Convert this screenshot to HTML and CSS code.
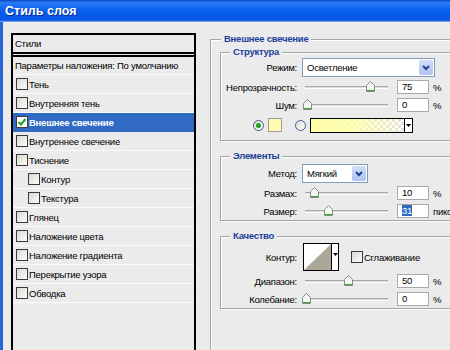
FILE: index.html
```html
<!DOCTYPE html>
<html>
<head>
	<meta charset="utf-8">
	<title>Стиль слоя</title>
	<link rel="stylesheet" href="styles.css">
</head>
<body>
	<div class="window">
		<div class="titlebar">Стиль слоя</div>
		<div class="frame">
			<div class="layer-list">
				<div class="list-head">Стили</div>
				<div class="list-row">Параметры наложения: По умолчанию</div>
				<div class="list-row"><span class="cb"></span>Тень</div>
				<div class="list-row"><span class="cb"></span>Внутренняя тень</div>
				<div class="list-row selected">
					<span class="cb"><svg width="10" height="10" viewBox="0 0 10 10"><path d="M1.5 5 L4 7.5 L8.5 2" fill="none" stroke="#21a121" stroke-width="2"/></svg></span>Внешнее свечение
				</div>
				<div class="list-row"><span class="cb"></span>Внутреннее свечение</div>
				<div class="list-row"><span class="cb"></span>Тиснение</div>
				<div class="list-row sub"><span class="cb"></span>Контур</div>
				<div class="list-row sub"><span class="cb"></span>Текстура</div>
				<div class="list-row"><span class="cb"></span>Глянец</div>
				<div class="list-row"><span class="cb"></span>Наложение цвета</div>
				<div class="list-row"><span class="cb"></span>Наложение градиента</div>
				<div class="list-row"><span class="cb"></span>Перекрытие узора</div>
				<div class="list-row"><span class="cb"></span>Обводка</div>
			</div>

			<div class="settings">
				<fieldset class="group outer">
					<legend>Внешнее свечение</legend>

					<fieldset class="group first">
						<legend>Структура</legend>
						<div class="row tall">
							<span class="label">Режим:</span>
							<div class="combo wide">
								<span class="combo-text">Осветление</span>
								<span class="combo-btn"><svg width="8" height="6" viewBox="0 0 8 6"><path d="M1 1 L4 4 L7 1" fill="none" stroke="#1f3f95" stroke-width="2"/></svg></span>
							</div>
						</div>
						<div class="row gap1">
							<span class="label">Непрозрачность:</span>
							<div class="slider">
								<div class="track"></div>
								<svg class="thumb" style="left:64px" width="9" height="11" viewBox="0 0 9 11"><path d="M0.5 4.5 L4.5 0.5 L8.5 4.5 V10.5 H0.5 Z" fill="#f6f6f2" stroke="#7d907d"/><path d="M1 9.5 H8" stroke="#3aa53a"/></svg>
							</div>
							<div class="num">75</div><span class="unit">%</span>
						</div>
						<div class="row">
							<span class="label">Шум:</span>
							<div class="slider">
								<div class="track"></div>
								<svg class="thumb" style="left:1px" width="9" height="11" viewBox="0 0 9 11"><path d="M0.5 4.5 L4.5 0.5 L8.5 4.5 V10.5 H0.5 Z" fill="#f6f6f2" stroke="#7d907d"/><path d="M1 9.5 H8" stroke="#3aa53a"/></svg>
							</div>
							<div class="num">0</div><span class="unit">%</span>
						</div>
						<div class="color-row">
							<span class="radio on"></span>
							<span class="swatch"></span>
							<span class="radio"></span>
							<span class="gradient"><span class="drop"><svg width="5" height="3" viewBox="0 0 5 3"><path d="M0 0 H5 L2.5 3 Z"/></svg></span></span>
						</div>
					</fieldset>

					<fieldset class="group">
						<legend>Элементы</legend>
						<div class="row tall pad">
							<span class="label">Метод:</span>
							<div class="combo narrow">
								<span class="combo-text">Мягкий</span>
								<span class="combo-btn"><svg width="8" height="6" viewBox="0 0 8 6"><path d="M1 1 L4 4 L7 1" fill="none" stroke="#1f3f95" stroke-width="2"/></svg></span>
							</div>
						</div>
						<div class="row gap1">
							<span class="label">Размах:</span>
							<div class="slider">
								<div class="track"></div>
								<svg class="thumb" style="left:8px" width="9" height="11" viewBox="0 0 9 11"><path d="M0.5 4.5 L4.5 0.5 L8.5 4.5 V10.5 H0.5 Z" fill="#f6f6f2" stroke="#7d907d"/><path d="M1 9.5 H8" stroke="#3aa53a"/></svg>
							</div>
							<div class="num">10</div><span class="unit">%</span>
						</div>
						<div class="row">
							<span class="label">Размер:</span>
							<div class="slider">
								<div class="track"></div>
								<svg class="thumb" style="left:22px" width="9" height="11" viewBox="0 0 9 11"><path d="M0.5 4.5 L4.5 0.5 L8.5 4.5 V10.5 H0.5 Z" fill="#f6f6f2" stroke="#7d907d"/><path d="M1 9.5 H8" stroke="#3aa53a"/></svg>
							</div>
							<div class="num"><span class="sel">31</span></div><span class="unit">пикс</span>
						</div>
					</fieldset>

					<fieldset class="group">
						<legend>Качество</legend>
						<div class="row contour-row">
							<span class="label">Контур:</span>
							<span class="contour">
								<svg class="curve" width="27" height="26" viewBox="0 0 27 26"><path d="M0 26 L27 0 V26 Z" fill="#aca899"/></svg>
								<span class="drop"><svg width="5" height="3" viewBox="0 0 5 3"><path d="M0 0 H5 L2.5 3 Z"/></svg></span>
							</span>
							<span class="cb"></span><span>Сглаживание</span>
						</div>
						<div class="row">
							<span class="label">Диапазон:</span>
							<div class="slider">
								<div class="track"></div>
								<svg class="thumb" style="left:42px" width="9" height="11" viewBox="0 0 9 11"><path d="M0.5 4.5 L4.5 0.5 L8.5 4.5 V10.5 H0.5 Z" fill="#f6f6f2" stroke="#7d907d"/><path d="M1 9.5 H8" stroke="#3aa53a"/></svg>
							</div>
							<div class="num">50</div><span class="unit">%</span>
						</div>
						<div class="row">
							<span class="label">Колебание:</span>
							<div class="slider">
								<div class="track"></div>
								<svg class="thumb" style="left:0px" width="9" height="11" viewBox="0 0 9 11"><path d="M0.5 4.5 L4.5 0.5 L8.5 4.5 V10.5 H0.5 Z" fill="#f6f6f2" stroke="#7d907d"/><path d="M1 9.5 H8" stroke="#3aa53a"/></svg>
							</div>
							<div class="num">0</div><span class="unit">%</span>
						</div>
					</fieldset>
				</fieldset>
			</div>
		</div>
	</div>
</body>
</html>
```

FILE: styles.css
```css
*{
	margin:0;
	padding:0;
	box-sizing:border-box;
}

body{
	width:450px;
	height:350px;
	overflow:hidden;
	background:#ebebeb;
	font-family:"Liberation Sans", Arial, sans-serif;
	font-size:9.5px;
	letter-spacing:-0.25px;
	color:#000;
}

.window{
	display:flex;
	flex-direction:column;
	height:350px;
	overflow:hidden;
}

.titlebar{
	flex:none;
	height:22px;
	line-height:22px;
	padding-left:5px;
	color:#fff;
	font-size:12.5px;
	font-weight:bold;
	letter-spacing:0;
	text-shadow:1px 1px 0 #0a2f9c;
	background:linear-gradient(#0843c4 0%, #2a7cf4 12%, #0a60ee 45%, #0656e6 85%, #1a64e8 95%, #b9c9ea 100%);
}

.frame{
	flex:1;
	min-height:0;
	display:flex;
	align-items:flex-start;
	overflow:hidden;
	border-left:3px solid #2a63d6;
	padding:11px 0 0 8px;
}

/* left list */

.layer-list{
	flex:none;
	width:185px;
	height:360px;
	border:2px solid #000;
}

.list-head{
	height:22px;
	padding:3px 0 0 2px;
	border-bottom:5px double #000;
}

.list-row{
	display:flex;
	align-items:center;
	height:19px;
	padding-left:3px;
	border-bottom:1px solid #fbfbfb;
	white-space:nowrap;
}

.list-row:nth-child(2){
	height:18px;
	padding-left:2px;
}

.list-row.sub{
	padding-left:15px;
}

.list-row.selected{
	background:#316ac5;
	color:#fff;
	font-weight:bold;
	border-bottom-color:#316ac5;
}

.cb{
	flex:none;
	display:flex;
	align-items:center;
	justify-content:center;
	width:12px;
	height:12px;
	margin-right:1px;
	border:1px solid #3a3a3a;
	background:linear-gradient(135deg, #d8d8d2, #fdfdfd);
}

.selected .cb{
	background:#fff;
}

/* right panel */

.settings{
	flex:none;
	width:290px;
	margin-left:14px;
}

.group{
	border:1px solid #a4a4a4;
	box-shadow:inset 1px 1px 0 #fff, 1px 1px 0 #fff;
	margin-top:9px;
	padding:0;
}

.group legend{
	margin-left:9px;
	padding:0 3px;
	line-height:12px;
	font-weight:bold;
	color:#1b3f9a;
	background:#ebebeb;
}

.group.outer{
	margin-top:0;
	height:340px;
	padding-left:9px;
}

.group.outer > legend{
	margin-left:1px;
}

.group.first{
	margin-top:1px;
	padding-bottom:7px;
}

.row{
	display:flex;
	align-items:center;
	height:18px;
	white-space:nowrap;
}

.row.tall{
	height:19px;
}

.row.pad{
	margin-top:2px;
}

.row.gap1{
	margin-top:1px;
}

.label{
	flex:none;
	width:76px;
	margin-right:5px;
	text-align:right;
}

.combo{
	display:flex;
	align-items:center;
	height:19px;
	border:1px solid #7f9db9;
	background:#fff;
}

.combo.wide{
	width:133px;
}

.combo.narrow{
	width:66px;
}

.combo-text{
	flex:1;
	padding-left:4px;
}

.combo-btn{
	display:flex;
	align-items:center;
	justify-content:center;
	width:14px;
	height:15px;
	margin-right:1px;
	border-radius:2px;
	background:linear-gradient(#d2dffa, #aec3f0);
}

.slider{
	position:relative;
	flex:none;
	width:95px;
	height:18px;
}

.track{
	margin:8px 0 0 3px;
	width:83px;
	height:3px;
	border-top:1px solid #a8a8a2;
	border-bottom:1px solid #fff;
	background:#dcdcd6;
}

.thumb{
	position:absolute;
	top:3px;
}

.num{
	flex:none;
	width:32px;
	height:14px;
	line-height:12px;
	padding-left:4px;
	border:1px solid #a9a9a9;
	background:#fff;
}

.sel{
	background:#316ac5;
	color:#fff;
}

.unit{
	margin-left:4px;
}

.color-row{
	display:flex;
	align-items:center;
	height:16px;
	margin-top:3px;
	padding-left:32px;
}

.radio{
	flex:none;
	display:flex;
	align-items:center;
	justify-content:center;
	width:11px;
	height:11px;
	border:1px solid #3f5f86;
	border-radius:50%;
	background:linear-gradient(135deg, #dcdcd6, #fff);
	margin-right:4px;
}

.radio.on::after{
	content:"";
	width:5px;
	height:5px;
	border-radius:50%;
	background:#21a121;
}

.swatch{
	flex:none;
	width:14px;
	height:14px;
	margin-right:13px;
	border:1px solid #9c9c9c;
	background:#fffbb0;
}

.gradient{
	flex:none;
	display:flex;
	justify-content:flex-end;
	width:103px;
	height:15px;
	border:1px solid #000;
	background:
		linear-gradient(to right, #ffffa8 0%, rgba(255,255,168,0.85) 40%, rgba(255,255,168,0) 95%),
		conic-gradient(#dedede 25%, #fff 0 50%, #dedede 0 75%, #fff 0) 0 0 / 6px 6px;
}

.drop{
	display:flex;
	align-items:center;
	justify-content:center;
	width:8px;
	border-left:1px solid #000;
	background:#fff;
}

.contour-row{
	height:30px;
}

.contour{
	flex:none;
	display:flex;
	width:36px;
	height:28px;
	margin-left:1px;
	border:1px solid #000;
	background:#fff;
}

.contour .curve{
	flex:none;
}

.contour .drop{
	align-items:flex-start;
	padding-top:9px;
}

.contour-row .cb{
	margin-left:12px;
}
```
